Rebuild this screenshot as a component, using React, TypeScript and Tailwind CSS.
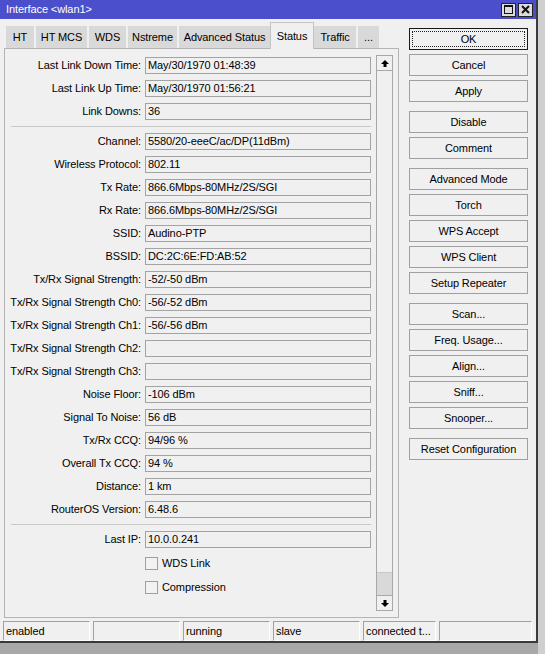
import React from "react";

const topRows: [string, string][] = [
  ["Last Link Down Time", "May/30/1970 01:48:39"],
  ["Last Link Up Time", "May/30/1970 01:56:21"],
  ["Link Downs", "36"],
];

const mainRows: [string, string][] = [
  ["Channel", "5580/20-eeeC/ac/DP(11dBm)"],
  ["Wireless Protocol", "802.11"],
  ["Tx Rate", "866.6Mbps-80MHz/2S/SGI"],
  ["Rx Rate", "866.6Mbps-80MHz/2S/SGI"],
  ["SSID", "Audino-PTP"],
  ["BSSID", "DC:2C:6E:FD:AB:52"],
  ["Tx/Rx Signal Strength", "-52/-50 dBm"],
  ["Tx/Rx Signal Strength Ch0", "-56/-52 dBm"],
  ["Tx/Rx Signal Strength Ch1", "-56/-56 dBm"],
  ["Tx/Rx Signal Strength Ch2", ""],
  ["Tx/Rx Signal Strength Ch3", ""],
  ["Noise Floor", "-106 dBm"],
  ["Signal To Noise", "56 dB"],
  ["Tx/Rx CCQ", "94/96 %"],
  ["Overall Tx CCQ", "94 %"],
  ["Distance", "1 km"],
  ["RouterOS Version", "6.48.6"],
];

const tabs = [
  { name: "HT", w: "w-[28px]" },
  { name: "HT MCS", w: "w-[51px]" },
  { name: "WDS", w: "w-[37px]" },
  { name: "Nstreme", w: "w-[49px]" },
  { name: "Advanced Status", w: "w-[91px]" },
  { name: "Status", w: "w-[44px]", active: true },
  { name: "Traffic", w: "w-[42px]" },
  { name: "...", w: "w-[21px]" },
];

const buttonGroups = [
  ["OK", "Cancel", "Apply"],
  ["Disable", "Comment"],
  ["Advanced Mode", "Torch", "WPS Accept", "WPS Client", "Setup Repeater"],
  ["Scan...", "Freq. Usage...", "Align...", "Sniff...", "Snooper..."],
  ["Reset Configuration"],
];

const statusCells = [
  { text: "enabled", w: "w-[87px]" },
  { text: "", w: "w-[87px]" },
  { text: "running", w: "w-[87px]" },
  { text: "slave", w: "w-[87px]" },
  { text: "connected t...", w: "w-[73px]" },
  { text: "", w: "w-[93px]" },
];

function Field({ label, value }: { label: string; value: string }) {
  return (
    <div className="flex h-[23px] items-center">
      <div className="w-[136px] text-right whitespace-nowrap">{label}:</div>
      <div className="ml-[4px] h-[17px] w-[226px] border border-[#a3a3a3] px-[2px] leading-[15px] whitespace-nowrap overflow-hidden">
        {value}
      </div>
    </div>
  );
}

function Separator() {
  return (
    <div className="flex h-[7px] items-center pl-[6px]">
      <div className="w-[360px] border-t border-[#c8c8c8]" />
    </div>
  );
}

function Check({ label }: { label: string }) {
  return (
    <div className="flex h-[24px] items-center pl-[140px]">
      <div className="h-[13px] w-[13px] border border-[#a0a0a0] bg-[#f2f2f2]" />
      <span className="ml-[4px]">{label}</span>
    </div>
  );
}

function Arrow({ down = false }: { down?: boolean }) {
  return (
    <svg width="8" height="7" viewBox="0 0 8 7" className={down ? "rotate-180" : ""}>
      <path d="M4 0 L8 4 H5.5 V7 H2.5 V4 H0 Z" fill="#000" />
    </svg>
  );
}

function Button({ label, focused = false }: { label: string; focused?: boolean }) {
  if (focused) {
    return (
      <div className="relative flex h-[22px] w-[119px] items-center justify-center border border-[#1a1a1a] bg-[#f0f0f0]">
        <div className="absolute inset-[2px] border border-dotted border-[#222]" />
        <span>{label}</span>
      </div>
    );
  }
  return (
    <div className="flex h-[22px] w-[119px] items-center justify-center border border-[#a0a0a0] bg-[#f0f0f0]">
      {label}
    </div>
  );
}

export default function App() {
  return (
    <div className="flex h-[654px] w-[545px] overflow-hidden font-['Liberation_Sans',Arial,sans-serif] text-[11px] tracking-[-0.1px] text-black">
      <div className="flex w-[538px] flex-col">
        <div className="flex h-[643px] flex-col border-r-2 border-b-2 border-[#3a3a3a] bg-[#f0f0f0]">
          {/* title bar */}
          <div className="flex h-[19px] items-center justify-between bg-[#4b4fcb] pl-[6px] pr-[3px] text-white">
            <span className="text-[11px]">Interface &lt;wlan1&gt;</span>
            <div className="flex gap-[2px]">
              <div className="flex h-[14px] w-[15px] items-center justify-center border border-[#222] bg-[#dcdcdc]">
                <div className="h-[9px] w-[9px] border border-t-2 border-[#111]" />
              </div>
              <div className="flex h-[14px] w-[15px] items-center justify-center border border-[#222] bg-[#dcdcdc]">
                <svg width="9" height="9" viewBox="0 0 9 9">
                  <path d="M1 1 L8 8 M8 1 L1 8" stroke="#111" strokeWidth="2" />
                </svg>
              </div>
            </div>
          </div>

          <div className="flex h-[599px]">
            {/* left: tabs + panel */}
            <div className="flex flex-col pl-[4px]">
              <div className="mt-[3px] flex h-[26px] items-end gap-[2px] pl-[2px]">
                {tabs.map((t) =>
                  t.active ? (
                    <div
                      key={t.name}
                      className={`relative z-10 -mx-[2px] -mb-px flex h-[27px] ${t.w} items-center justify-center border border-b-0 border-[#c4c4c4] bg-[#f0f0f0]`}
                    >
                      {t.name}
                    </div>
                  ) : (
                    <div
                      key={t.name}
                      className={`flex h-[22px] ${t.w} items-center justify-center bg-[#d9d9d9] whitespace-nowrap`}
                    >
                      {t.name}
                    </div>
                  )
                )}
              </div>

              <div className="flex h-[570px] w-[395px] border border-[#b4b4b4]">
                <div className="flex w-[366px] flex-col pt-[5px]">
                  {topRows.map(([l, v]) => (
                    <Field key={l} label={l} value={v} />
                  ))}
                  <Separator />
                  {mainRows.map(([l, v]) => (
                    <Field key={l} label={l} value={v} />
                  ))}
                  <Separator />
                  <Field label="Last IP" value="10.0.0.241" />
                  <Check label="WDS Link" />
                  <Check label="Compression" />
                </div>

                {/* scrollbar */}
                <div className="ml-[5px] mt-[6px] flex h-[556px] w-[17px] flex-col border border-[#a8a8a8] bg-[#f0f0f0]">
                  <div className="flex h-[15px] items-center justify-center border-b border-[#a8a8a8]">
                    <Arrow />
                  </div>
                  <div className="flex-1" />
                  <div className="h-[23px] border-t border-[#c8c8c8] bg-[#d9d9d9]" />
                  <div className="flex h-[15px] items-center justify-center border-t border-[#a8a8a8]">
                    <Arrow down />
                  </div>
                </div>
              </div>
            </div>

            {/* right: buttons */}
            <div className="ml-[10px] mt-[9px] flex flex-col gap-[9px]">
              {buttonGroups.map((g, gi) => (
                <div key={gi} className="flex flex-col gap-[4px]">
                  {g.map((b) => (
                    <Button key={b} label={b} focused={b === "OK"} />
                  ))}
                </div>
              ))}
            </div>
          </div>

          {/* status bar */}
          <div className="mt-[3px] flex h-[20px] gap-[3px] pl-[3px]">
            {statusCells.map((c, i) => (
              <div
                key={i}
                className={`flex ${c.w} items-center border border-t-[#a0a0a0] border-l-[#a0a0a0] border-r-[#ffffff] border-b-[#ffffff] pl-[2px] whitespace-nowrap overflow-hidden`}
              >
                {c.text}
              </div>
            ))}
          </div>
        </div>
        <div className="flex-1 bg-[#a8a8a8]" />
      </div>
      <div className="w-[7px] bg-[#cfcfcf]" />
    </div>
  );
}
